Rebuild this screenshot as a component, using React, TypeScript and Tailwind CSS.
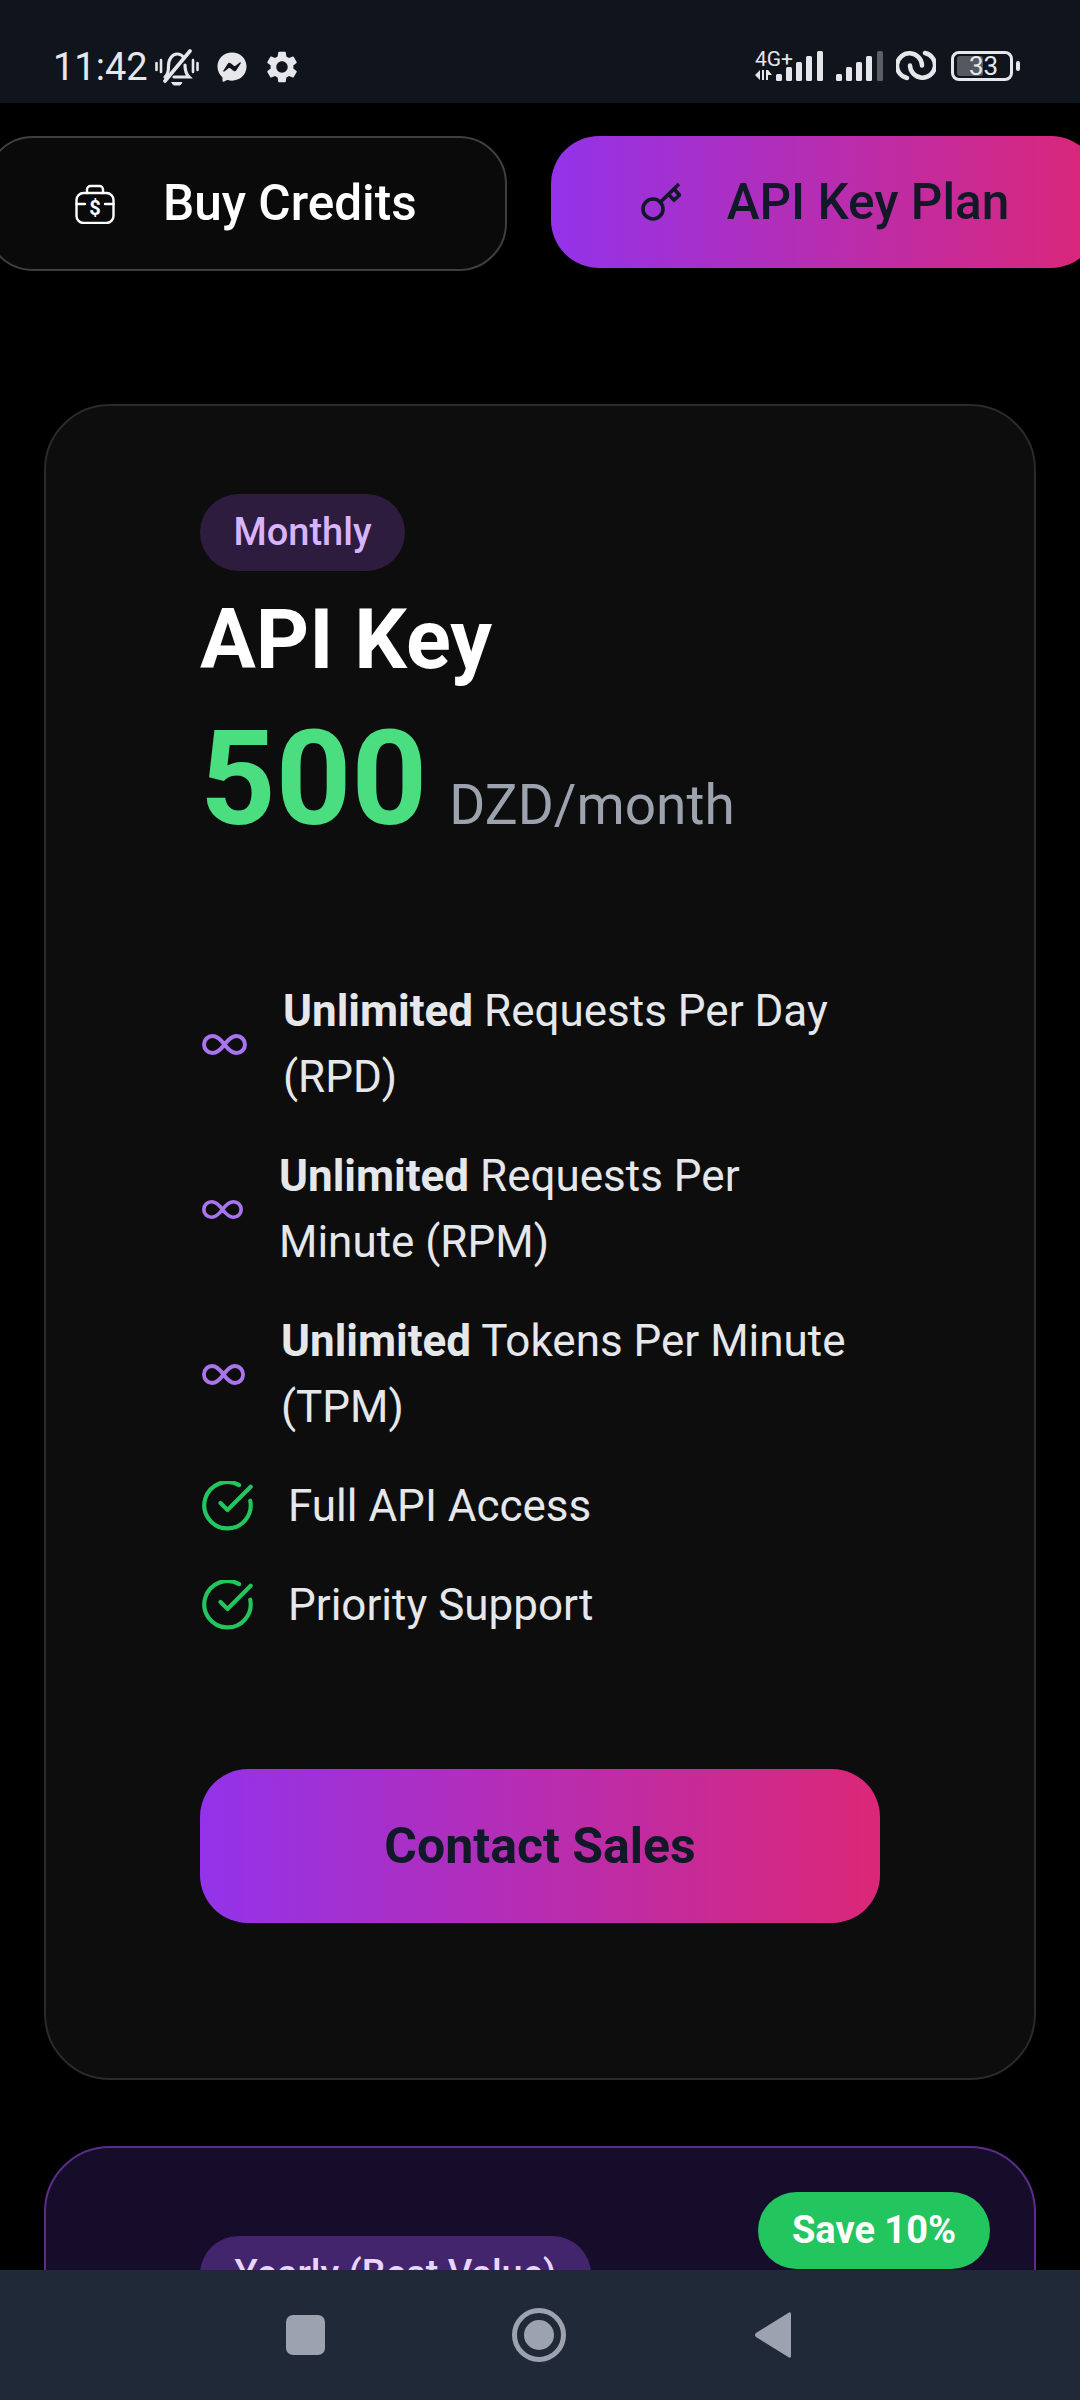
import { FaFacebookMessenger } from "react-icons/fa";
import { MdSettings } from "react-icons/md";

const BellOffIcon = () => (
  <svg viewBox="0 0 44 37" className="h-[37px] w-[44px]" fill="none" stroke="#e5e7eb" strokeLinecap="round">
    <path d="M1.500 14v7M6 11v12M38 11v12M42.500 14v7" strokeWidth="2.600" />
    <path d="M10 28c3-2 3.500-6 3.500-11 0-7 4-12 8.500-12 3 0 5.500 1.500 7 4M30 16c0 5 1 9 4 12H19" strokeWidth="3.200" />
    <path d="M17 33.500h10l-2 2.500h-6z" fill="#e5e7eb" strokeWidth="1" />
    <path d="M10 32 35 2" strokeWidth="3.600" />
  </svg>
);

const SignalBars = ({ dimLast }: { dimLast?: boolean }) => (
  <svg viewBox="0 0 47 30" className="h-[30px] w-[47px]">
    <rect x="0" y="23" width="6" height="7" rx="1.500" fill="#e5e7eb" />
    <rect x="10" y="16" width="6" height="14" rx="1.500" fill="#e5e7eb" />
    <rect x="20" y="11" width="6" height="19" rx="1.500" fill="#e5e7eb" />
    <rect x="30" y="5" width="6" height="25" rx="1.500" fill="#e5e7eb" />
    <rect x="41" y="0" width="6" height="30" rx="1.500" fill={dimLast ? "#5b5f65" : "#e5e7eb"} />
  </svg>
);

const LinkRings = () => (
  <svg viewBox="0 0 40 31" className="h-[31px] w-[40px]" fill="none" stroke="#e5e7eb" strokeWidth="4.500" strokeLinecap="round">
    <path d="M11 28A12.500 12.500 0 1 1 26 15.500" />
    <path d="M14 15.500A12.500 12.500 0 1 0 29 3" />
  </svg>
);

const Battery = () => (
  <div className="ml-[2px] flex items-center gap-[3px]">
    <div className="relative flex h-[30px] w-[62px] items-center rounded-[8px] border-[3px] border-[#e5e7eb] px-[3px]">
      <div className="h-[20px] w-[26px] rounded-[3px] bg-[#55595f]" />
      <span className="absolute inset-0 flex items-center justify-center pl-[3px] text-[26px] leading-none text-[#e5e7eb]">33</span>
    </div>
    <div className="h-[10px] w-[4px] rounded-full bg-[#e5e7eb]" />
  </div>
);

const StatusBar = () => (
  <div className="flex h-[103px] shrink-0 items-start justify-between bg-[#10151d] pl-[53px] pr-[60px]">
    <div className="flex items-center pt-[48px]">
      <span className="w-[102px] text-[38px] leading-[37px] text-[#e5e7eb]">11:42</span>
      <BellOffIcon />
      <FaFacebookMessenger className="ml-[18px] text-[30px] text-[#e5e7eb]" />
      <MdSettings className="ml-[16px] text-[38px] text-[#e5e7eb]" />
    </div>
    <div className="flex items-end gap-[13px] pt-[48px]">
      <div className="flex items-end">
        <div className="flex w-[21px] flex-col">
          <span className="whitespace-nowrap text-[21px] leading-[22px] text-[#e5e7eb]">4G+</span>
          <svg viewBox="0 0 17 10" className="mb-[1px] h-[10px] w-[17px]" fill="#e5e7eb">
            <path d="M0 5 5 0v10zM7 0h2v10H7zM11 0h2l4 5h-4v5h-2z" />
          </svg>
        </div>
        <SignalBars />
      </div>
      <SignalBars dimLast />
      <LinkRings />
      <Battery />
    </div>
  </div>
);

const MoneyBagIcon = () => (
  <svg viewBox="0 0 40 40" className="h-[40px] w-[40px] shrink-0" fill="none" stroke="#fff" strokeWidth="2.400" strokeLinecap="round">
    <path d="M12 9V5.500A3.500 3.500 0 0 1 15.500 2h9A3.500 3.500 0 0 1 28 5.500V9" />
    <rect x="1.500" y="9" width="37" height="30" rx="7" />
    <path d="M1.500 20H10M30 20h8.500" />
    <text x="20" y="31" fontSize="20" fontWeight="700" fill="#fff" stroke="none" textAnchor="middle">$</text>
  </svg>
);

const KeyIcon = () => (
  <svg viewBox="0 0 40 40" className="h-[40px] w-[40px] shrink-0" fill="none" stroke="#111827" strokeWidth="3.600">
    <circle cx="12" cy="27" r="10" />
    <path d="M19.500 20 38 2" />
    <path d="m27 12 6 6 5.500-5-5.500-6" />
  </svg>
);

const InfinityIcon = ({ className }: { className: string }) => (
  <svg viewBox="0 0 45 21" preserveAspectRatio="none" className={className} fill="none" stroke="#a974ee" strokeWidth="4">
    <path d="M22.500 10.500C18 4.500 14.500 2 10.500 2a8.500 8.500 0 0 0 0 17c4 0 7.500-2.500 12-8.500S30.500 2 34.500 2a8.500 8.500 0 0 1 0 17c-4 0-7.500-2.500-12-8.500Z" />
  </svg>
);

const CheckIcon = () => (
  <svg viewBox="1 1.500 22 22" className="h-[51px] w-[51px] shrink-0" fill="none" stroke="#22c55e" strokeWidth="1.800" strokeLinecap="round" strokeLinejoin="round">
    <path d="M21.800 10A10 10 0 1 1 17 3.300" />
    <path d="m9 11 3 3L22 4" />
  </svg>
);

const UnlimitedRow = ({ iconClass, label }: { iconClass: string; label: string }) => (
  <li className="flex items-center gap-[36px] pl-[2px]">
    <InfinityIcon className={iconClass} />
    <span className="flex-1">
      <span className="font-bold">Unlimited</span> {label}
    </span>
  </li>
);

const CheckRow = ({ label }: { label: string }) => (
  <li className="flex items-center gap-[35px] pl-[2px]">
    <CheckIcon />
    <span>{label}</span>
  </li>
);

const NavBar = () => (
  <div className="flex h-[130px] shrink-0 items-center bg-[#1f2937] pl-[286px]">
    <div className="h-[40px] w-[39px] rounded-[7px] bg-[#9ca3af]" />
    <div className="ml-[187px] flex h-[54px] w-[54px] items-center justify-center rounded-full border-[5px] border-[#9ca3af]">
      <div className="h-[30px] w-[30px] rounded-full bg-[#9ca3af]" />
    </div>
    <svg viewBox="0 0 36 46" className="ml-[189px] h-[46px] w-[36px]" fill="#9ca3af">
      <path d="M34 0.500c1.200-.6 2 .2 2 1.500v42c0 1.300-.8 2.100-2 1.500L1 25c-1.300-1-1.300-3 0-4Z" />
    </svg>
  </div>
);

export default function App() {
  return (
    <div className="flex h-[2400px] w-[1080px] flex-col overflow-hidden bg-black font-[Roboto,sans-serif]">
      <StatusBar />
      <main className="min-h-0 flex-1 overflow-hidden pt-[33px]">
        <div className="-ml-[15px] flex w-max items-start gap-[44px]">
          <button className="flex h-[135px] items-center gap-[48px] rounded-[48px] border-2 border-[#3f3f3f] bg-[#0a0a0a] px-[88px] text-[49.5px] font-medium text-white">
            <MoneyBagIcon />
            Buy Credits
          </button>
          <button className="flex h-[132px] items-center gap-[46px] rounded-[48px] bg-linear-to-r/srgb from-[#9333ea] to-[#db2777] px-[90px] text-[49.5px] font-medium text-[#111827]">
            <KeyIcon />
            API Key Plan
          </button>
        </div>

        <section className="mx-[44px] mt-[133px] rounded-[66px] border-2 border-[#2a2a2a] bg-[#0d0d0d] px-[154px] pb-[155px] pt-[88px]">
          <span className="flex h-[77px] w-[205px] items-center justify-center rounded-full bg-[#2e1c3f] text-[38px] font-medium text-[#d8b4fe]">
            Monthly
          </span>
          <h2 className="mt-[21px] text-[83px] font-bold leading-[96px] text-white">API Key</h2>
          <div className="mt-[25px] flex items-baseline gap-[22px]">
            <span className="text-[132px] font-bold leading-[132px] text-[#4ade80]">500</span>
            <span className="text-[55px] leading-[55px] text-[#9ca3af]">DZD/month</span>
          </div>

          <ul className="mt-[133px] flex flex-col gap-[33px] text-[44px] leading-[66px] text-[#e5e7eb]">
            <UnlimitedRow iconClass="h-[21px] w-[45px] shrink-0" label="Requests Per Day (RPD)" />
            <UnlimitedRow iconClass="h-[19px] w-[41px] shrink-0" label="Requests Per Minute (RPM)" />
            <UnlimitedRow iconClass="h-[21px] w-[43px] shrink-0" label="Tokens Per Minute (TPM)" />
            <CheckRow label="Full API Access" />
            <CheckRow label="Priority Support" />
          </ul>

          <button className="mt-[131px] h-[154px] w-full rounded-[48px] bg-linear-to-r/srgb from-[#9333ea] to-[#db2777] text-[50px] font-bold text-[#111827]">
            Contact Sales
          </button>
        </section>

        <section className="relative mx-[44px] mt-[66px] h-[600px] rounded-[66px] border-2 border-[#5b2d8a] bg-[#150d2a] px-[154px] pt-[88px]">
          <span className="absolute right-[44px] top-[44px] flex h-[77px] w-[232px] items-center justify-center rounded-full bg-[#22c55e] text-[38px] font-bold text-white">
            Save 10%
          </span>
          <span className="flex h-[77px] w-[391px] items-center justify-center rounded-full bg-[#43256e] text-[38px] font-medium text-[#e9d5ff]">
            Yearly (Best Value)
          </span>
        </section>
      </main>
      <NavBar />
    </div>
  );
}
